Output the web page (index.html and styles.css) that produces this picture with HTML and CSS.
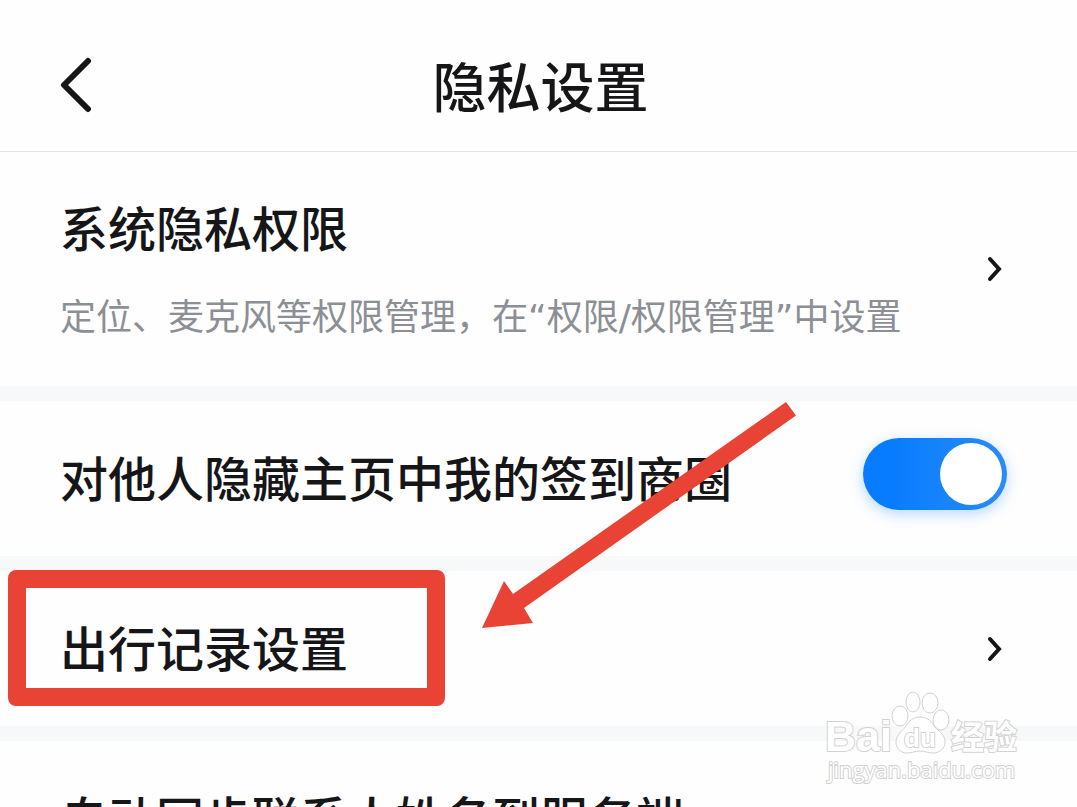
FILE: index.html
```
<!DOCTYPE html>
<html lang="zh-CN">
<head>
    <meta charset="UTF-8">
    <meta name="viewport" content="width=device-width, initial-scale=1.0">
    <title>隐私设置</title>
    <link rel="stylesheet" href="styles.css">
</head>
<body>
    <header class="header">
        <button class="back" type="button" aria-label="返回">
            <svg width="32" height="56" viewBox="0 0 32 56">
                <path d="M28 4 L4 28 L28 52" fill="none" stroke="#161618" stroke-width="6" stroke-linecap="round" stroke-linejoin="round"/>
            </svg>
        </button>
        <h1>隐私设置</h1>
    </header>

    <main class="list">
        <a class="row row-tall" href="#system">
            <span class="texts">
                <span class="label">系统隐私权限</span>
                <span class="desc">定位、麦克风等权限管理，在“权限/权限管理”中设置</span>
            </span>
            <svg class="chevron" width="16" height="26" viewBox="0 0 16 26">
                <path d="M3 3 L12 13 L3 23" fill="none" stroke="#161618" stroke-width="4" stroke-linecap="round"/>
            </svg>
        </a>

        <div class="row">
            <label class="label" for="hideCircle">对他人隐藏主页中我的签到商圈</label>
            <input class="switch" type="checkbox" id="hideCircle" checked>
            <svg class="arrow" width="320" height="230" viewBox="0 0 320 230" aria-hidden="true">
                <path d="M304 1 L314 14.500 L42 207 L51 222 L0 227 L22 180 L31 193 Z" fill="#e94335"/>
            </svg>
        </div>

        <a class="row" href="#trips">
            <span class="label">出行记录设置</span>
            <svg class="chevron" width="16" height="26" viewBox="0 0 16 26">
                <path d="M3 3 L12 13 L3 23" fill="none" stroke="#161618" stroke-width="4" stroke-linecap="round"/>
            </svg>
            <span class="highlight"></span>
        </a>

        <div class="row">
            <span class="label">自动同步联系人姓名到服务端</span>
            <svg class="watermark" width="200" height="96" viewBox="0 0 200 96" aria-hidden="true">
                <text class="mark-main" x="-2" y="60" font-size="43">Bai</text>
                <g class="mark-shape">
                    <ellipse cx="73" cy="25" rx="8" ry="10"/>
                    <ellipse cx="86" cy="11" rx="7" ry="10"/>
                    <ellipse cx="103" cy="12" rx="8" ry="10"/>
                    <ellipse cx="114" cy="29" rx="8" ry="10"/>
                    <path d="M93 26 C101 26 105 31 108 36 C111 40 118 43 118 51 C118 58 112 62 106 62 C101 62 98 60 93 60 C88 60 85 62 80 62 C73 62 69 57 69 51 C69 43 76 40 79 35 C82 30 86 26 93 26 Z"/>
                </g>
                <text class="mark-main" x="77" y="56" font-size="26">du</text>
                <text class="mark-main mark-cjk" x="124" y="58" font-size="33">经验</text>
                <text class="mark-url" x="1" y="87" font-size="22">jingyan.baidu.com</text>
            </svg>
        </div>
    </main>
</body>
</html>
```
FILE: styles.css
```
* {
    box-sizing: border-box;
}

body {
    margin: 0;
    background-color: #fefefe;
    color: #161618;
    font-family: "Noto Sans CJK SC", sans-serif;
    overflow-x: hidden;
}

.header {
    display: grid;
    grid-template-columns: 120px 1fr 116px;
    align-items: center;
    height: 152px;
    padding-top: 18px;
    border-bottom: 1px solid #e4e4e6;
}

.back {
    display: flex;
    padding: 0 0 0 60px;
    border: none;
    background: none;
    cursor: pointer;
}

h1 {
    margin: 0;
    font-size: 54px;
    line-height: 80px;
    font-weight: 500;
    text-align: center;
}

.list {
    display: flex;
    flex-direction: column;
    gap: 15px;
    background-color: #f7f8f9;
}

.row {
    position: relative;
    display: flex;
    align-items: center;
    justify-content: space-between;
    min-height: 155px;
    padding: 0 70px 0 60px;
    background-color: #fefefe;
    color: inherit;
    text-decoration: none;
}

.row-tall {
    min-height: 234px;
}

.texts {
    display: flex;
    flex-direction: column;
    gap: 28px;
    padding-top: 6px;
}

.label {
    font-size: 48px;
    line-height: 64px;
    font-weight: 500;
    white-space: nowrap;
}

.row > .label {
    padding-bottom: 6px;
}

.desc {
    font-family: "DejaVu Sans", "Noto Sans CJK SC", sans-serif;
    font-size: 36px;
    line-height: 64px;
    color: #8c8f94;
    white-space: nowrap;
}

.chevron {
    flex: none;
    margin-right: 4px;
}

.switch {
    appearance: none;
    flex: none;
    width: 144px;
    height: 72px;
    margin: 0 0 10px;
    padding: 5px;
    border-radius: 36px;
    background: #d8dade;
    cursor: pointer;
}

.switch::before {
    content: "";
    display: block;
    width: 62px;
    height: 62px;
    border-radius: 50%;
    background-color: #fff;
}

.switch:checked {
    background: linear-gradient(90deg, #087cff 20%, #2a8cf6);
    box-shadow: 0 4px 14px rgba(20, 130, 255, 0.3);
}

.switch:checked::before {
    margin-left: auto;
}

/* red marks drawn over the list */
.arrow {
    position: absolute;
    top: 0;
    left: 482px;
    z-index: 1;
    pointer-events: none;
}

.highlight {
    position: absolute;
    top: -1px;
    left: 8px;
    width: 437px;
    height: 136px;
    border: 18px solid #e94335;
    border-radius: 8px;
}

.watermark {
    position: absolute;
    top: -50px;
    right: 50px;
    overflow: visible;
}

.mark-shape,
.mark-main,
.mark-url {
    fill: #fff;
    stroke: #d2d2d2;
    stroke-width: 1px;
}

.mark-main,
.mark-url {
    font-family: "Liberation Sans", sans-serif;
    font-weight: 700;
    stroke-width: 2px;
    paint-order: stroke;
}

.mark-cjk {
    font-family: "Noto Sans CJK SC", sans-serif;
}

.mark-url {
    font-family: "Open Sans", sans-serif;
    font-weight: 400;
}
```
